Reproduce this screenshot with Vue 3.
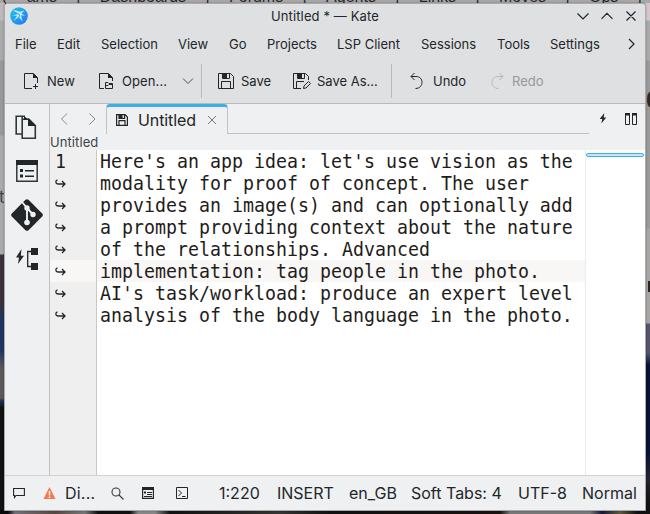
<script setup>
const menu = [
  ['File', 42], ['Edit', 44], ['Selection', 77], ['View', 51], ['Go', 38],
  ['Projects', 70], ['LSP Client', 84], ['Sessions', 76], ['Tools', 53], ['Settings', 78],
]
const lines = [
  "Here's an app idea: let's use vision as the",
  'modality for proof of concept. The user',
  'provides an image(s) and can optionally add',
  'a prompt providing context about the nature',
  'of the relationships. Advanced',
  'implementation: tag people in the photo.',
  "AI's task/workload: produce an expert level",
  'analysis of the body language in the photo.',
]
</script>

<template>
  <div class="desktop">
    <div class="behind-text">
      <span>(</span><span>ams</span><span>|</span><span>Dashboards</span><span>|</span><span>Forums</span><span>|</span><span>Agents</span><span>|</span><span>Links</span><span>|</span><span>Moves</span><span>|</span><span>Ops</span><span>|</span>
    </div>
    <div class="edge left"><span>t</span></div>
    <div class="edge right"><b>0</b><i></i></div>
    <div class="edge bottom"></div>

    <div class="window">
      <header class="head">
        <div class="title">
          <svg class="logo" width="18" height="18" viewBox="0 0 18 18">
            <defs><linearGradient id="kg" x2="1" y2="1"><stop offset="0" stop-color="#18c9ef" /><stop offset="1" stop-color="#2871ef" /></linearGradient></defs>
            <circle cx="9" cy="9" r="8.8" fill="url(#kg)" />
            <path d="M3 3.200Q7 3 9.500 4.800L14.300 3.500 11.500 6.500 15 8.800 11 8.300 12.600 14.800 8.800 10 3.600 13.800 7.200 8.800 2.500 8.500 8 7.100Z" fill="#c4eafc" />
            <path d="M4.500 5 9.500 7.500 8.300 13" fill="none" stroke="#2aa6ee" stroke-width="1" />
          </svg>
          <span class="caption">Untitled * — Kate</span>
          <svg class="winbtns" width="60" height="16" viewBox="0 0 60 16" fill="none" stroke="#232629" stroke-width="1.200">
            <path d="M1.500 5.500 7 11 12.500 5.500M25.500 10.800 31 5.300 36.500 10.800M50.500 3.500 59.500 12.500M59.500 3.500 50.500 12.500" />
          </svg>
        </div>
        <nav class="menu">
          <span v-for="m in menu" :key="m[0]" :style="{ width: m[1] + 'px' }">{{ m[0] }}</span>
          <svg width="8" height="12" viewBox="0 0 8 12" fill="none" stroke="#232629" stroke-width="1.200"><path d="M1 1 6 6 1 11" /></svg>
        </nav>
        <div class="tools">
          <div class="tool new">
            <svg width="18" height="18" viewBox="0 0 18 18"><path d="M9 16.500H1.500V1.500H10.500L14.500 5.500V11M12.500 12V17M10 14.500H15" fill="none" stroke="#232629" /><path d="M10 1 15 6H10Z" fill="#232629" /></svg>
            <span>New</span>
          </div>
          <div class="tool open">
            <svg width="18" height="18" viewBox="0 0 18 18"><path d="M6 16.500H1.500V1.500H10.500L14.500 5.500V9" fill="none" stroke="#232629" /><path d="M10 1 15 6H10Z" fill="#232629" /><path d="M7.500 16.500V10.500H10L11 11.500H14.500V16.500ZM7.500 13.500H10L11 12.500H14" fill="none" stroke="#232629" /></svg>
            <span>Open...</span>
            <svg class="drop" width="12" height="8" viewBox="0 0 12 8"><path d="M1 1.500 6 6.500 11 1.500" fill="none" stroke="#4d5053" /></svg>
          </div>
          <i class="sep"></i>
          <div class="tool save">
            <svg width="18" height="18" viewBox="0 0 18 18"><path d="M1.500 1.500H13.500L16.500 4.500V16.500H1.500ZM4.500 16.500V9.500H13.500V16.500M5.500 1.500V6.500H12.500V1.500" fill="none" stroke="#232629" /><path d="M5 1H10V6H5Z" fill="#232629" /></svg>
            <span>Save</span>
          </div>
          <div class="tool saveas">
            <svg width="20" height="18" viewBox="0 0 20 18"><path d="M9 16.500H1.500V1.500H13.500L16.500 4.500V8M4.500 16.500V9.500H12M5.500 1.500V6.500H12.500V1.500M11.500 16.500 12 14 16.500 9.500 18.500 11.500 14 16Z" fill="none" stroke="#232629" /><path d="M5 1H10V6H5Z" fill="#232629" /></svg>
            <span>Save As...</span>
          </div>
          <i class="sep"></i>
          <div class="tool undo">
            <svg width="18" height="18" viewBox="0 0 18 18" fill="none" stroke="#232629"><path d="M5.500 1 2 4.500 5.500 8M2 4.500H7C11 4.500 13 7.300 13 10.300S11 16.500 6.500 16.500" /></svg>
            <span>Undo</span>
          </div>
          <div class="tool redo">
            <svg width="18" height="18" viewBox="0 0 18 18" fill="none" stroke="#b5b7b9"><path d="M9.500 1 13 4.500 9.500 8M13 4.500H8C4 4.500 2 7.300 2 10.300S4 16.500 8.500 16.500" /></svg>
            <span>Redo</span>
          </div>
        </div>
      </header>

      <main class="body">
        <aside class="side">
          <svg width="22" height="25" viewBox="0 0 22 25"><path d="M7 19H1.200V1.200H10" fill="none" stroke="#31363b" stroke-width="1.600" /><path d="M7.200 5V2M7.200 4.200H14L20.300 10.500V23.200H7.200Z" fill="none" stroke="#31363b" stroke-width="1.600" /><path d="M9 1 14 5H9ZM13 3 21 11H13Z" fill="#232629" /></svg>
          <svg width="22" height="22" viewBox="0 0 22 22"><path d="M.8.8H21.200V21.200H.8Z" fill="none" stroke="#31363b" stroke-width="1.500" /><path d="M0 0H22V5H0ZM4 9H7V12H4ZM4 14.500H7V17.500H4ZM9 10H18V11.500H9ZM9 15.500H18V17H9Z" fill="#232629" /></svg>
          <svg width="32" height="32" viewBox="0 0 32 32"><path d="M14.500.8Q16 -.5 17.500.8L31.200 14.500Q32.500 16 31.200 17.500L17.500 31.200Q16 32.500 14.500 31.200L.8 17.500Q-.5 16 .8 14.500Z" fill="#232629" /><path d="M11 3 16 9V23M16 9 21.500 15" fill="none" stroke="#eff0f1" stroke-width="1.900" /><circle cx="16" cy="9" r="2.700" fill="#eff0f1" /><circle cx="16" cy="23.500" r="2.800" fill="#eff0f1" /><circle cx="22" cy="15.500" r="2.700" fill="#eff0f1" /></svg>
          <svg width="22" height="22" viewBox="0 0 22 22"><path d="M5.500 1 0 9.500H3L2 16 8 7.800H4.800ZM15 0H22V7H15ZM15 15H22V22H15Z" fill="#232629" /><path d="M15 3.500H11.700V18.500H15" fill="none" stroke="#232629" stroke-width="1.300" /></svg>
        </aside>

        <section class="pane">
          <div class="tabs">
            <div class="history">
              <svg width="38" height="14" viewBox="0 0 38 14" fill="none" stroke="#85898c"><path d="M9 1.500 3.500 7 9 12.500M31.500 1.500 37 7 31.500 12.500" /></svg>
            </div>
            <div class="tab">
              <svg width="12" height="12" viewBox="0 0 12 12"><path d="M.6.6H9L11.400 3V11.400H.6ZM3 11.400V6.600H9V11.400M3 .6V4.400H8.600V.6" fill="none" stroke="#232629" stroke-width="1.200" /><path d="M3 0H6.500V4H3Z" fill="#232629" /></svg>
              <span>Untitled</span>
              <svg class="close" width="8" height="8" viewBox="0 0 8 8"><path d="M0 0 8 8M8 0 0 8" stroke="#74787b" /></svg>
            </div>
            <div class="rest"></div>
            <div class="actions">
              <svg width="8" height="11" viewBox="0 0 8 11"><path d="M5.300 0 .7 6H3.300L2.300 10.500 7.300 4.500H4.700Z" fill="#232629" /></svg>
              <svg width="12" height="12" viewBox="0 0 12 12"><path d="M.5.5H4.500V11.500H.5ZM7.500.5H11.500V11.500H7.500Z" fill="none" stroke="#232629" /><path d="M0 0H5V2.500H0ZM7 0H12V2.500H7Z" fill="#232629" /></svg>
            </div>
          </div>
          <div class="crumb">Untitled</div>
          <div class="editor">
            <div class="code">
              <div v-for="(l, i) in lines" :key="i" class="row" :class="{ current: i === 5 }">
                <span class="num">
                  <b v-if="i === 0" class="glyphs">1</b>
                  <svg v-else width="12" height="9" viewBox="0 0 12 9" fill="none" stroke="#232629" stroke-width="1.300"><path d="M2.500.8C.2 1.500.2 5 3 5H10M7 2 10 5 7 8" /></svg>
                </span>
                <span class="txt"><b class="glyphs">{{ l }}</b></span>
              </div>
              <div class="filler"></div>
            </div>
            <div class="minimap"><div class="viewport"></div></div>
          </div>
        </section>
      </main>

      <footer class="status">
        <svg class="bubble" width="12" height="12" viewBox="0 0 12 12"><path d="M.6 1.500H11.400V8.500H3L1.500 10.500V8.500H.6Z" fill="none" stroke="#232629" stroke-width="1.100" /></svg>
        <svg class="warn" width="13" height="12" viewBox="0 0 13 12"><path d="M6.500 0 12.500 12H.5Z" fill="#f67750" /><path d="M5.800 4H7.200V8.500H5.800ZM5.800 9.500H7.200V11H5.800Z" fill="#fff" /></svg>
        <span class="diag">Di...</span>
        <svg class="search" width="13" height="13" viewBox="0 0 13 13" fill="none" stroke="#34383b" stroke-width="1.100"><circle cx="5" cy="5" r="4" /><path d="M8 8 12.500 12.500" /></svg>
        <svg class="outp" width="12" height="12" viewBox="0 0 12 12"><path d="M.6.6H11.400V11.400H.6Z" fill="none" stroke="#232629" stroke-width="1.200" /><path d="M0 0H12V3H0ZM2 4.500H4V6.500H2ZM5 5H10V6H5ZM5 7H10V8H5ZM2 9H10V10H2Z" fill="#232629" /></svg>
        <svg class="term" width="12" height="12" viewBox="0 0 12 12" fill="none" stroke="#232629"><path d="M.5.5H11.500V11.500H.5ZM2.500 3 5.500 6 2.500 9M6 9.500H9.500" /></svg>
        <span class="pos">1:220</span>
        <span class="ins">INSERT</span>
        <span class="lang">en_GB</span>
        <span class="indent">Soft Tabs: 4</span>
        <span class="enc">UTF-8</span>
        <span class="mode">Normal</span>
      </footer>
    </div>
  </div>
</template>

<style>
body { margin: 0; overflow: hidden; }
</style>

<style scoped>
* { box-sizing: border-box; }
svg { display: block; flex: none; }
.desktop { position: relative; width: 650px; height: 514px; overflow: hidden; padding: 3px 4px; background: #aaa7a9; font-family: Inter, sans-serif; font-size: 13px; color: #232629; }
.behind-text { position: absolute; left: 2px; top: -13px; width: 640px; display: flex; justify-content: space-between; font: 16px/20px "Liberation Sans", sans-serif; color: #28282d; white-space: nowrap; }
.edge { position: absolute; overflow: hidden; }
.edge.left { left: 0; top: 3px; width: 5px; height: 511px; background: linear-gradient(#c0b8bc 0 17px, #aaa 18px 57px, #999 58px 132px, #aaa 133px 251px, #39313b 252px 300px, #1e3562 315px 347px, #5d5858 365px 395px, #1d3057 398px, #111 405px); }
.edge.left span { position: absolute; left: -1px; top: 184px; font-size: 17px; color: #38464c; }
.edge.right { right: 0; top: 3px; width: 5px; height: 511px; background: linear-gradient(#d5c5cc 0 17px, #aaa 18px 57px, #9a9a9a 58px 225px, #a8a6a4 226px 320px, #55546e 321px 350px, #07123b 362px 450px, #252333 475px, #111 500px); }
.edge.right b { position: absolute; left: 1px; top: 82px; font: 24px/30px "Liberation Sans", sans-serif; font-weight: 700; color: #292b2e; }
.edge.right i { position: absolute; right: 0; top: 278px; width: 2px; height: 11px; background: #30221e; }
.edge.bottom { left: 0; bottom: 0; width: 650px; height: 4px; background: linear-gradient(90deg, #08080a 8px, #777078 15px, #594842 55px, #777 85px, #111 98px, #111 130px, #888 138px 155px, #111 170px, #343532 280px, #111 330px, #19120f 500px, #777 510px 590px, #171735 602px, #625a40 620px, #111 637px); }
.window { position: relative; width: 642px; height: 508px; border: 1px solid #a9abad; border-radius: 4px 4px 0 0; background: #eff0f1; display: flex; flex-direction: column; overflow: hidden; box-shadow: 0 0 2px #0005; }
.head { height: 100px; background: #dee0e2; border-bottom: 1px solid #b7b9bb; flex: none; }
.title { height: 24px; display: flex; align-items: center; padding-left: 5px; }
.caption { width: 110px; margin-left: 243px; white-space: nowrap; line-height: 16px; letter-spacing: .12px; }
.winbtns { margin-left: 195px; }
.menu { height: 32px; display: flex; align-items: center; padding-left: 10px; white-space: nowrap; }
.tools { height: 42px; display: flex; align-items: center; padding-left: 18px; white-space: nowrap; }
.tool { display: flex; align-items: center; gap: 6px; flex: none; }
.new { width: 75px; }
.open { width: 103px; }
.open span { letter-spacing: .1px; }
.drop { margin-left: 9px; }
.sep { width: 1px; height: 34px; background: #b7b9bb; flex: none; }
.save { margin-left: 15px; width: 75px; }
.saveas { width: 99px; gap: 5px; }
.undo { margin-left: 17px; width: 81px; gap: 6px; }
.redo { gap: 4px; color: #96999b; }
.body { flex: 1; min-height: 0; display: flex; }
.side { width: 45px; flex: none; border-right: 1px solid #bfc1c3; display: flex; flex-direction: column; align-items: center; padding-top: 11px; }
.side svg:first-child { transform: translateX(-1px); }
.side svg:nth-child(2) { margin-top: 20px; }
.side svg:nth-child(3) { margin-top: 17px; }
.side svg:nth-child(4) { margin-top: 17px; }
.pane { flex: 1; min-width: 0; display: flex; flex-direction: column; }
.tabs { height: 30px; display: flex; flex: none; }
.history { width: 56px; padding: 8px 0 0 8px; }
.tab { width: 122px; height: 30px; border: 1px solid #c1c3c5; border-top: 3px solid #3daee9; border-bottom: 0; border-radius: 4px 4px 0 0; display: flex; align-items: center; padding: 0 0 2px 9px; }
.tab span { margin-left: 10px; width: 70px; font-size: 16px; line-height: 20px; letter-spacing: -.1px; }
.rest { width: 361px; border-bottom: 1px solid #bfc1c3; }
.actions { display: flex; gap: 18px; padding: 9px 0 0 10px; }
.crumb { height: 16px; line-height: 16px; color: #414549; padding-left: 0; flex: none; letter-spacing: .08px; }
.editor { flex: 1; display: flex; background: #fff; min-height: 0; }
.code { width: 535px; display: flex; flex-direction: column; font-family: "DejaVu Sans Mono", monospace; font-size: 18.270px; line-height: 22px; color: #1f1c1b; }
.row { height: 22px; display: flex; flex: none; }
.glyphs { display: block; font-weight: 400; transform: scaleY(1.06); transform-origin: 0 17px; position: relative; top: 1px; }
.num { width: 47px; background: #efefef; border-right: 1px solid #c8c8c8; display: flex; align-items: center; padding-left: 5px; flex: none; }
.txt { padding-left: 3px; white-space: pre; flex: 1; }
.current .txt, .current .num { background-color: #f8f7f6; }
.filler { width: 47px; flex: 1; background: #efefef; border-right: 1px solid #c8c8c8; }
.minimap { width: 60px; border-left: 1px solid #ececed; padding: 3px 1px 0 0; }
.viewport { height: 4px; border: 1px solid #3daee9; border-radius: 2px; background: #c9e7f7; }
.status { height: 35px; flex: none; border-top: 1px solid #cfd1d2; display: flex; align-items: center; padding-left: 8px; font-size: 16px; white-space: nowrap; }
.warn { margin-left: 18px; }
.diag { margin-left: 9px; width: 45px; letter-spacing: .2px; }
.search { margin-left: 1px; }
.outp { margin-left: 18px; }
.term { margin-left: 22px; }
.pos { margin-left: 31px; width: 58px; }
.ins { width: 72px; }
.lang { width: 62px; }
.indent { width: 107px; }
.enc { width: 64px; }
</style>
